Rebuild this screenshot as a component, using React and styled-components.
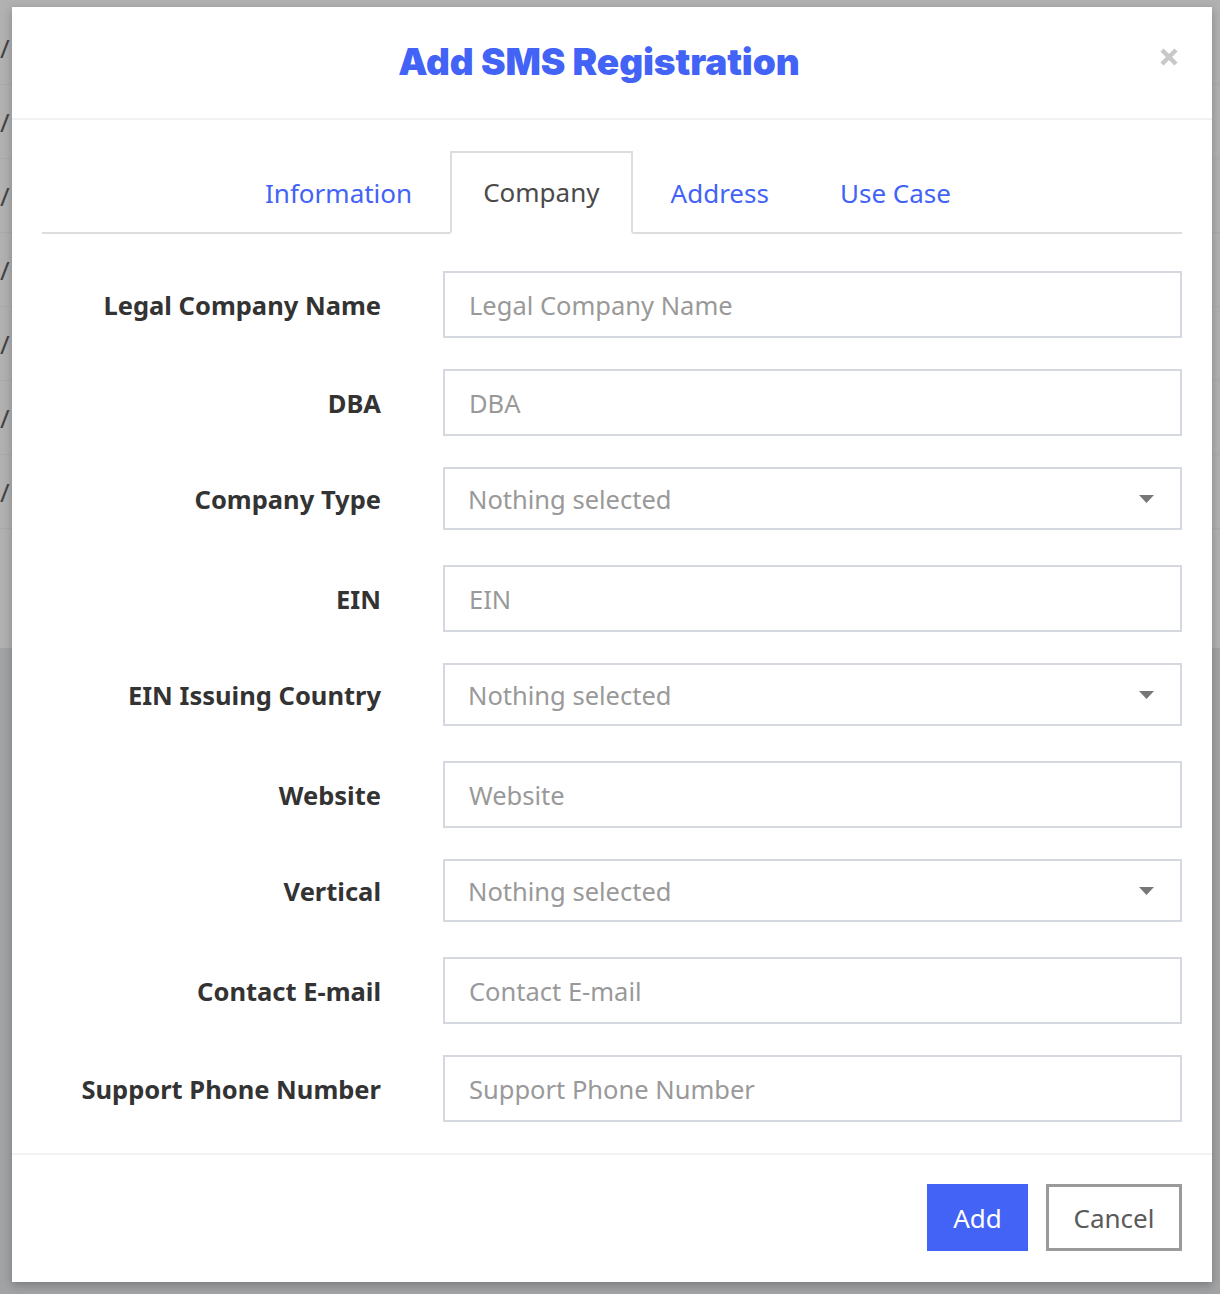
import React, { useState } from "react";
import styled, { createGlobalStyle } from "styled-components";

const GlobalStyle = createGlobalStyle`
  html, body {
    margin: 0;
    padding: 0;
    background: #a2a3a5;
  }
  * {
    box-sizing: border-box;
  }
`;

const Screen = styled.div`
  position: relative;
  width: 1220px;
  height: 1294px;
  overflow: hidden;
  background: #a2a3a5;
  font-family: "Noto Sans", "Open Sans", sans-serif;
`;

const BackTable = styled.div`
  height: 648px;
  background: #b1b1b1;
  padding-top: 11px;
`;

const BackRow = styled.div`
  height: 74px;
  border-bottom: 1px solid #aaaaaa;
  display: flex;
  align-items: center;
  color: #444;
  font-size: 26px;
  line-height: 1;
`;

const Dialog = styled.div`
  position: absolute;
  left: 12px;
  top: 7px;
  width: 1200px;
  height: 1275px;
  background: #fff;
  box-shadow: 0 3px 9px rgba(0, 0, 0, 0.25);
  display: flex;
  flex-direction: column;
`;

const Header = styled.div`
  position: relative;
  height: 114px;
  border-bottom: 2px solid #f2f2f2;
  display: flex;
  align-items: center;
  justify-content: center;
`;

const Title = styled.h1`
  margin: 0;
  font-family: Inter, "Open Sans", sans-serif;
  font-weight: 900;
  font-size: 37px;
  letter-spacing: -0.1px;
  color: #4263f5;
  padding-bottom: 2px;
  padding-right: 26px;
`;

const CloseButton = styled.button`
  position: absolute;
  right: 33px;
  top: 40px;
  width: 20px;
  height: 20px;
  padding: 0;
  border: none;
  background: none;
  cursor: pointer;
  display: flex;
`;

const Body = styled.div`
  padding: 31px 30px 0 30px;
  flex: 1;
`;

const TabBar = styled.div`
  display: flex;
  justify-content: center;
  gap: 5px;
  border-bottom: 2px solid #dddddd;
  padding-right: 8px;
`;

const Tab = styled.button`
  height: 83px;
  margin-bottom: -2px;
  padding: 0 31px 2px;
  font-family: "Noto Sans", "Open Sans", sans-serif;
  font-size: 26px;
  cursor: pointer;
  background: ${(p) => (p.$active ? "#fff" : "transparent")};
  border: 2px solid ${(p) => (p.$active ? "#dddddd" : "transparent")};
  border-bottom: ${(p) => (p.$active ? "2px solid #fff" : "none")};
  color: ${(p) => (p.$active ? "#4a4a4a" : "#4263f5")};
`;

const Form = styled.div`
  padding-top: 37px;
  display: flex;
  flex-direction: column;
`;

const Row = styled.div`
  display: grid;
  grid-template-columns: 339px 1fr;
  column-gap: 62px;
  height: 98px;
  align-items: start;
`;

const Label = styled.label`
  height: ${(p) => (p.$select ? "63px" : "67px")};
  display: flex;
  align-items: center;
  justify-content: flex-end;
  font-weight: 700;
  font-size: 25.5px;
  color: #333;
`;

const TextInput = styled.input`
  width: 100%;
  height: 67px;
  border: 2px solid #d5d8de;
  padding: 0 24px;
  font-family: "Noto Sans", "Open Sans", sans-serif;
  font-size: 25.5px;
  color: #333;
  outline: none;
  &::placeholder {
    color: #999;
  }
`;

const SelectBox = styled.button`
  width: 100%;
  height: 63px;
  border: 2px solid #d5d8de;
  background: #fff;
  padding: 0 26px 0 23px;
  display: flex;
  align-items: center;
  justify-content: space-between;
  font-family: "Noto Sans", "Open Sans", sans-serif;
  font-size: 25.5px;
  color: #999;
  cursor: pointer;
`;

const Footer = styled.div`
  border-top: 2px solid #f2f2f2;
  height: 130px;
  padding: 0 30px 2px 0;
  display: flex;
  align-items: center;
  justify-content: flex-end;
  gap: 18px;
`;

const Button = styled.button`
  height: 67px;
  padding: 0 ${(p) => (p.$primary ? "22px" : "20px")};
  font-family: "Noto Sans", "Open Sans", sans-serif;
  font-size: 26px;
  cursor: pointer;
  background: ${(p) => (p.$primary ? "#4263f5" : "#fff")};
  color: ${(p) => (p.$primary ? "#fff" : "#5a5a5a")};
  border: ${(p) => (p.$primary ? "none" : "3px solid #9a9a9a")};
  min-width: ${(p) => (p.$primary ? "101px" : "136px")};
`;

const Caret = () => (
  <svg width="15" height="8" viewBox="0 0 15 8">
    <path d="M0 0 L15 0 L7.5 8 Z" fill="#777" />
  </svg>
);

const fields = [
  { label: "Legal Company Name", placeholder: "Legal Company Name" },
  { label: "DBA", placeholder: "DBA" },
  { label: "Company Type", select: true },
  { label: "EIN", placeholder: "EIN" },
  { label: "EIN Issuing Country", select: true },
  { label: "Website", placeholder: "Website" },
  { label: "Vertical", select: true },
  { label: "Contact E-mail", placeholder: "Contact E-mail" },
  { label: "Support Phone Number", placeholder: "Support Phone Number" },
];

const tabs = ["Information", "Company", "Address", "Use Case"];

export default function App() {
  const [active, setActive] = useState("Company");

  return (
    <Screen>
      <GlobalStyle />
      <BackTable>
        {Array.from({ length: 7 }).map((_, i) => (
          <BackRow key={i}>/</BackRow>
        ))}
      </BackTable>

      <Dialog>
        <Header>
          <Title>Add SMS Registration</Title>
          <CloseButton aria-label="Close">
            <svg width="20" height="20" viewBox="0 0 20 20">
              <path
                d="M3 3 L17 17 M17 3 L3 17"
                stroke="#c8c8c8"
                strokeWidth="4.5"
              />
            </svg>
          </CloseButton>
        </Header>

        <Body>
          <TabBar>
            {tabs.map((t) => (
              <Tab key={t} $active={active === t} onClick={() => setActive(t)}>
                {t}
              </Tab>
            ))}
          </TabBar>

          <Form>
            {fields.map((f) => (
              <Row key={f.label}>
                <Label $select={f.select}>{f.label}</Label>
                {f.select ? (
                  <SelectBox type="button">
                    <span>Nothing selected</span>
                    <Caret />
                  </SelectBox>
                ) : (
                  <TextInput placeholder={f.placeholder} />
                )}
              </Row>
            ))}
          </Form>
        </Body>

        <Footer>
          <Button $primary>Add</Button>
          <Button>Cancel</Button>
        </Footer>
      </Dialog>
    </Screen>
  );
}
